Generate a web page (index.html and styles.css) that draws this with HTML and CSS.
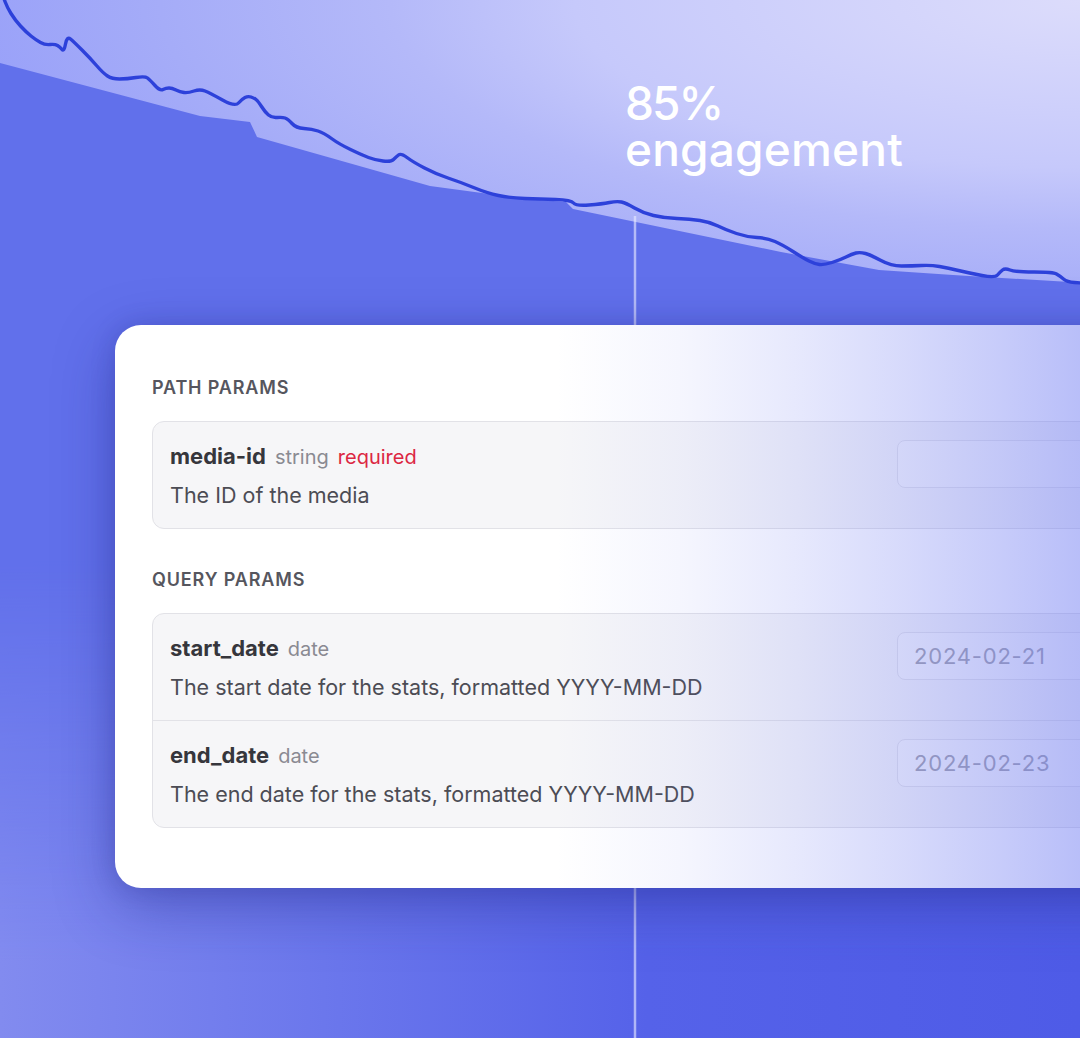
FILE: index.html
```html
<!DOCTYPE html>
<html lang="en">
<head>
<meta charset="utf-8">
<title>Media stats API</title>
<link rel="stylesheet" href="styles.css">
</head>
<body>
<div class="stage">
  <svg class="chart" viewBox="0 0 1080 1038" width="1080" height="1038" aria-hidden="true">
    <defs>
      <linearGradient id="lowerTint" gradientUnits="userSpaceOnUse" x1="0" y1="0" x2="1080" y2="0">
        <stop offset="0" stop-color="#828bef"/>
        <stop offset="0.3" stop-color="#6b77ec"/>
        <stop offset="0.6" stop-color="#5562e9"/>
        <stop offset="1" stop-color="#4e5be7"/>
      </linearGradient>
      <linearGradient id="fadeDown" gradientUnits="userSpaceOnUse" x1="0" y1="560" x2="0" y2="960">
        <stop offset="0" stop-color="#fff" stop-opacity="0"/>
        <stop offset="1" stop-color="#fff" stop-opacity="1"/>
      </linearGradient>
      <mask id="lowerMask" maskUnits="userSpaceOnUse" x="0" y="0" width="1080" height="1038">
        <rect x="0" y="0" width="1080" height="1038" fill="url(#fadeDown)"/>
      </mask>
    </defs>
    <polygon class="area" points="0,63 200,116 250,122 257,137 430,186 482,193 515,197 540,200 566,202 573,209 781,252 879,270 953,275 1070,282 1080,283 1080,1038 0,1038"/>
    <rect x="0" y="540" width="1080" height="498" fill="url(#lowerTint)" mask="url(#lowerMask)"/>
    <line class="marker" x1="635" y1="216" x2="635" y2="1038"/>
    <path class="trend" d="M3,-4 L5,1.5 Q7,7 11,13.5 Q15,20 20.5,26 Q26,32 31,36 Q36,40 40.5,42.5 Q45,45 50,44.5 Q55,44 57.5,45.5 Q60,47 62,49.5 Q64,52 65.5,44 Q67,36 70.5,39 Q74,42 82,50 Q90,58 96.5,65.5 Q103,73 107.5,76 Q112,79 119.5,79 Q127,79 136,77.5 Q145,76 147.5,78 Q150,80 155,85.5 Q160,91 163,89.5 Q166,88 169,88 Q172,88 176,90 Q180,92 184,92.5 Q188,93 194,91 Q200,89 205,91 Q210,93 222.5,100 Q235,107 238.5,103 Q242,99 245,97.5 Q248,96 251,97 Q254,98 256,99.5 Q258,101 261.5,106.5 Q265,112 268.5,115 Q272,118 277,117.5 Q282,117 285,118 Q288,119 292,123.5 Q296,128 304,128.5 Q312,129 318,131 Q324,133 331.5,138.5 Q339,144 350.5,149.5 Q362,155 368.5,157.5 Q375,160 383,161 Q391,162 393.5,159.5 Q396,157 398.5,155 Q401,153 407,157.5 Q413,162 424.5,168 Q436,174 448,178 Q460,182 473.5,187.5 Q487,193 498.5,195.5 Q510,198 525,198.5 Q540,199 555.5,199.5 Q571,200 573.5,203 Q576,206 589,205 Q602,204 609.5,202.5 Q617,201 621.5,202 Q626,203 634.5,208 Q643,213 653.5,215.5 Q664,218 677,218.5 Q690,219 700,220.5 Q710,222 718,226 Q726,230 736.5,233.5 Q747,237 757,237.5 Q767,238 775,241.5 Q783,245 793,251.5 Q803,258 809,261 Q815,264 819.5,264.5 Q824,265 832,262.5 Q840,260 846,257 Q852,254 856,253 Q860,252 865.5,253.5 Q871,255 881,260.5 Q891,266 901.5,266 Q912,266 921.5,265.5 Q931,265 939.5,266.5 Q948,268 958.5,270.5 Q969,273 982,275.5 Q995,278 997.5,275 Q1000,272 1002.5,270 Q1005,268 1010,270 Q1015,272 1034,272 Q1053,272 1056.5,274 Q1060,276 1063.5,279 Q1067,282 1074.5,282.5 L1082,283"/>
  </svg>

  <div class="metric">
    <span class="metric-line metric-value">85%</span>
    <span class="metric-line">engagement</span>
  </div>

  <section class="card">
    <div class="group">
      <h3 class="group-title">PATH PARAMS</h3>
      <div class="param-list">
        <div class="param">
          <div class="param-info">
            <div class="param-head"><span class="name">media-id</span><span class="type">string</span><span class="req">required</span></div>
            <p class="desc">The ID of the media</p>
          </div>
          <div class="field"></div>
        </div>
      </div>
    </div>

    <div class="group">
      <h3 class="group-title">QUERY PARAMS</h3>
      <div class="param-list">
        <div class="param">
          <div class="param-info">
            <div class="param-head"><span class="name">start_date</span><span class="type">date</span></div>
            <p class="desc">The start date for the stats, formatted YYYY-MM-DD</p>
          </div>
          <div class="field">2024-02-21</div>
        </div>
        <div class="param">
          <div class="param-info">
            <div class="param-head"><span class="name">end_date</span><span class="type">date</span></div>
            <p class="desc">The end date for the stats, formatted YYYY-MM-DD</p>
          </div>
          <div class="field">2024-02-23</div>
        </div>
      </div>
    </div>
    <div class="card-tint"></div>
  </section>
</div>
</body>
</html>
```

FILE: styles.css
```css
* { box-sizing: border-box; }

html, body {
  margin: 0;
  padding: 0;
}

body {
  font-family: Inter, "Noto Sans", "Liberation Sans", sans-serif;
  background: #5562e9;
}

.stage {
  position: relative;
  width: 1080px;
  height: 1038px;
  overflow: hidden;
  padding: 325px 0 0 115px;
  background:
    radial-gradient(ellipse 1150px 380px at 100% 0%,
      #dcdcfb 0%, #c6c9fb 44%, #b4b9f9 60%, #a5acf8 80%, #979ff9 100%),
    #949cf9;
}

.chart {
  position: absolute;
  left: 0;
  top: 0;
  z-index: 0;
}

.chart .area { fill: #6170eb; }

.chart .marker {
  stroke: rgba(232, 234, 255, 0.62);
  stroke-width: 2.5;
}

.chart .trend {
  fill: none;
  stroke: #2d41da;
  stroke-width: 3.4;
  stroke-linejoin: round;
  stroke-linecap: round;
}

.metric {
  position: absolute;
  left: 625px;
  top: 80px;
  z-index: 1;
  display: flex;
  flex-direction: column;
  color: #ffffff;
  font-size: 46px;
  font-weight: 500;
  letter-spacing: 0.2px;
}

.metric-line {
  display: block;
  height: 46px;
  line-height: 46px;
}

.metric-value { letter-spacing: -2px; }

.card {
  position: relative;
  z-index: 2;
  width: 1078px;
  padding: 49px 37px 60px;
  background: #ffffff;
  border-radius: 26px;
  box-shadow: 0 18px 60px rgba(28, 34, 130, 0.38), 0 0 24px rgba(28, 34, 130, 0.18);
  overflow: hidden;
}

.card-tint {
  position: absolute;
  inset: 0;
  pointer-events: none;
  background: linear-gradient(90deg,
    rgba(108, 120, 242, 0) 0px,
    rgba(108, 120, 242, 0) 440px,
    rgba(108, 120, 242, 0.07) 570px,
    rgba(108, 120, 242, 0.17) 685px,
    rgba(108, 120, 242, 0.27) 785px,
    rgba(108, 120, 242, 0.38) 885px,
    rgba(108, 120, 242, 0.48) 965px,
    rgba(108, 120, 242, 0.55) 1078px);
}

.group + .group { margin-top: 37px; }

.group-title {
  margin: 0 0 20px;
  font-size: 18px;
  line-height: 27px;
  font-weight: 600;
  color: #56565e;
  letter-spacing: 0.85px;
}

.param-list {
  border: 1px solid #e2e2e7;
  border-radius: 12px;
  background: #f6f6f8;
}

.param {
  display: flex;
  align-items: flex-start;
  gap: 24px;
  padding: 18px 18px 16px 17px;
}

.param + .param { border-top: 1px solid #e2e2e7; }

.param-info {
  flex: 1;
  min-width: 0;
}

.param-head {
  display: flex;
  align-items: baseline;
  gap: 9px;
  height: 33px;
  line-height: 33px;
}

.name {
  font-size: 22px;
  font-weight: 700;
  color: #36363c;
}

.type {
  font-size: 20px;
  color: #8a8a92;
}

.req {
  font-size: 20px;
  color: #dc2743;
}

.desc {
  margin: 6px 0 0;
  font-size: 21.5px;
  line-height: 33px;
  color: #4c4c54;
}

.field {
  flex: none;
  width: 240px;
  height: 48px;
  padding: 0 16px;
  border: 1px solid #e3e3e9;
  border-radius: 8px;
  background: #f9f9fb;
  font-size: 22px;
  line-height: 46px;
  letter-spacing: 0.8px;
  color: #a2a2ad;
}
```
